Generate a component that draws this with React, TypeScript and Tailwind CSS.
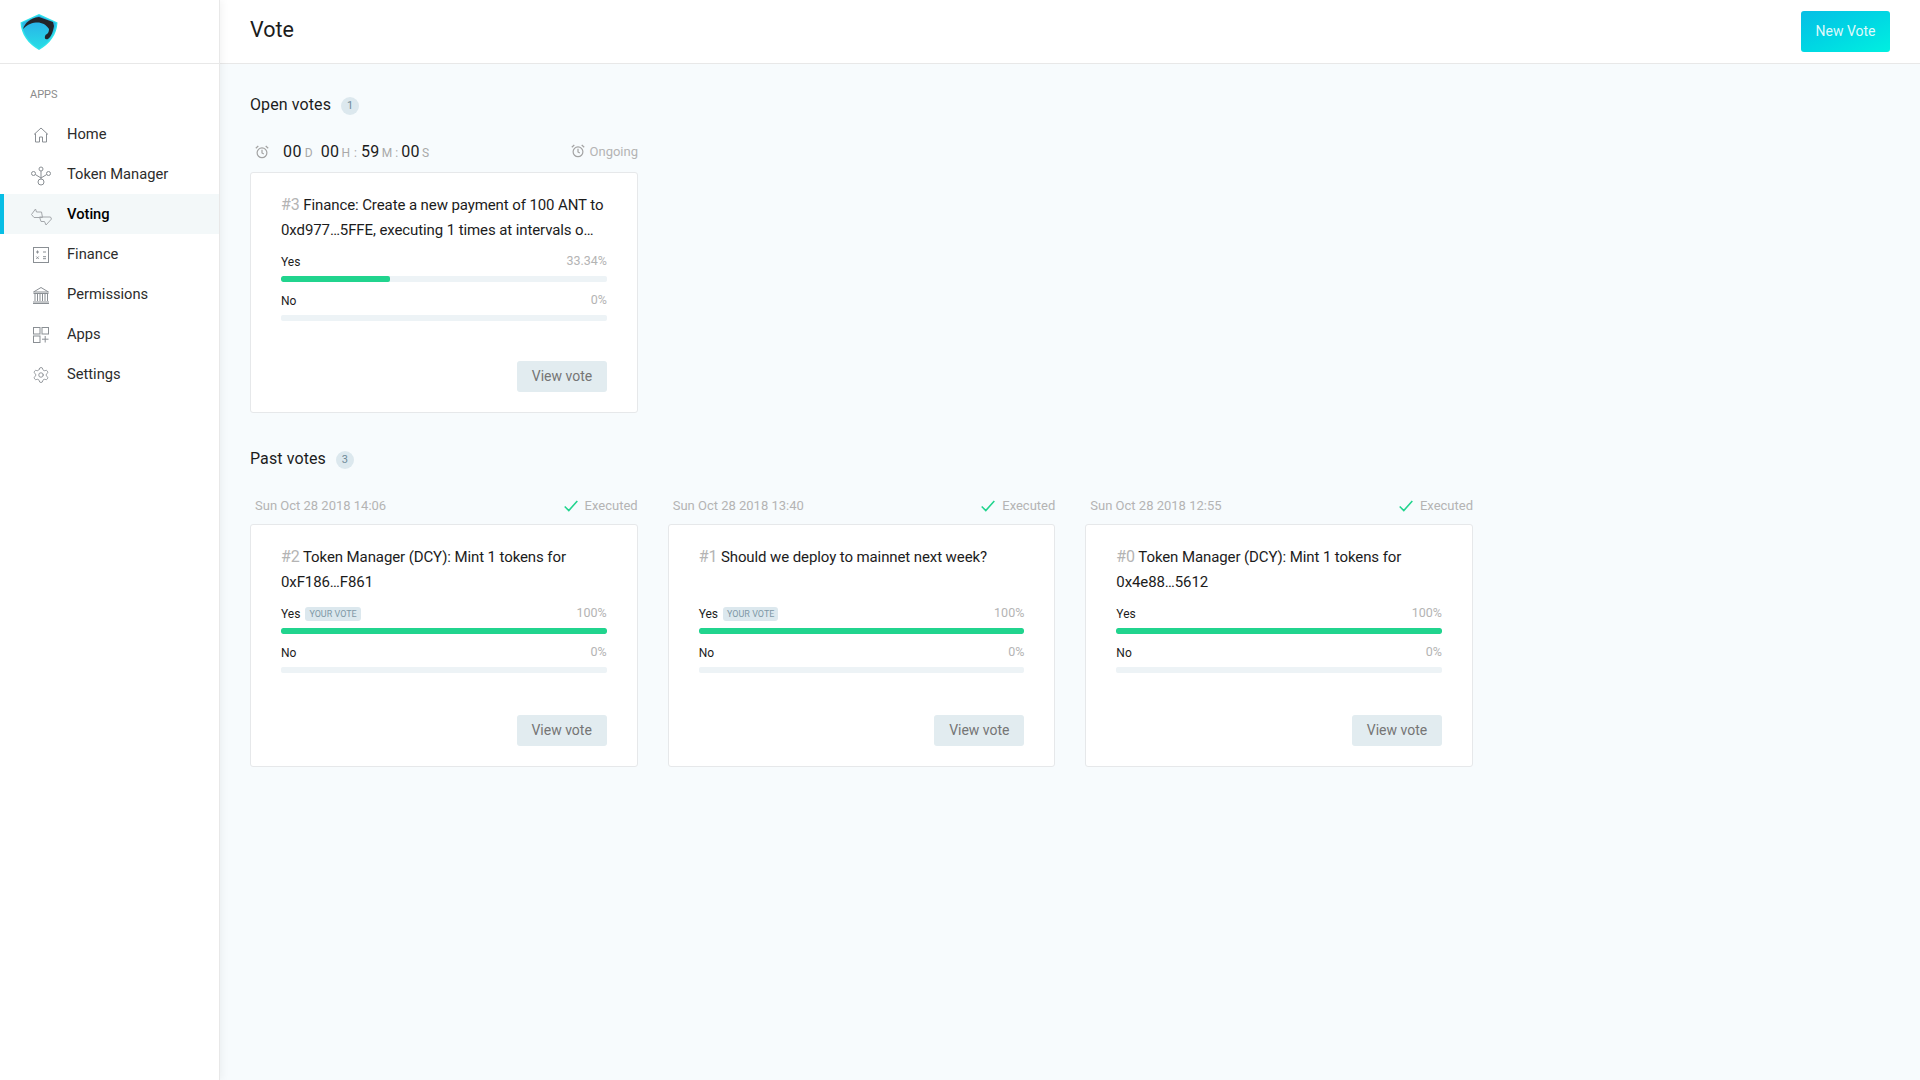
import React from "react";
import { Settings } from "lucide-react";

const FONT = "font-['Roboto','Liberation_Sans',sans-serif]";

const iconProps = {
  width: 22,
  height: 22,
  viewBox: "0 0 22 22",
  fill: "none",
  stroke: "#8a8f94",
  strokeWidth: 1,
};

const HomeIcon = () => (
  <svg {...iconProps}>
    <path d="M4 10.500 11 4l7 6.500M5.500 9.500V18h4v-5h3v5h4V9.500" />
  </svg>
);

const TokenIcon = () => (
  <svg {...iconProps}>
    <circle cx="11" cy="5" r="2" />
    <circle cx="3.500" cy="9.500" r="2" />
    <circle cx="18.500" cy="9.500" r="2" />
    <circle cx="11" cy="18" r="3" />
    <path d="M11 7v8M5.300 10.500 11 14l5.700-3.500" />
  </svg>
);

const VotingIcon = () => (
  <svg {...iconProps} stroke="#a4a8ac">
    <path d="M1.500 10.500 5.500 5l1 3h5l1 5.500H4z" />
    <path d="M21.500 15 16 21l-1.500-3.500H11L9.500 13h11z" />
  </svg>
);

const FinanceIcon = () => (
  <svg {...iconProps}>
    <rect x="3.500" y="3.500" width="15" height="15" />
    <path d="M6 8h3M7.500 6.500v3M13 8h3M6.300 12.500l2.400 2.400M8.700 12.500l-2.400 2.400M13 12.700h3M13 14.700h3" />
  </svg>
);

const BankIcon = () => (
  <svg {...iconProps}>
    <path d="M3.500 8 11 3.500 18.500 8zM3.500 9.500h15M5 10v7M7.500 10v7M10 10v7M12.500 10v7M15 10v7M17.500 10v7M3 18h16M3 19.500h16" />
  </svg>
);

const AppsIcon = () => (
  <svg {...iconProps}>
    <rect x="3.500" y="3.500" width="6.500" height="6.500" />
    <rect x="12" y="3.500" width="6.500" height="6.500" />
    <rect x="3.500" y="12" width="6.500" height="6.500" />
    <path d="M15.200 12v6.500M12 15.200h6.500" />
  </svg>
);

const AlarmIcon = ({ className }: { className: string }) => (
  <svg width="14" height="14" viewBox="0 0 14 14" fill="none" stroke="#a3a3a3" strokeWidth="1.200" className={className}>
    <circle cx="7" cy="7.800" r="4.900" />
    <path d="M7 4.800v3.200l1.800 1M.8 3.300 3.300 1M13.200 3.300 10.700 1" />
  </svg>
);

const CheckIcon = () => (
  <svg width="14" height="12" viewBox="0 0 14 12" fill="none" stroke="#21d48e" strokeWidth="1.600" className="mr-[7px]">
    <path d="M.7 6.500 4.800 10.500 13.300 1" />
  </svg>
);

const Logo = () => (
  <svg width="38" height="36" viewBox="0 0 38 36">
    <defs>
      <linearGradient id="shield" x1="0" y1="0" x2="0" y2="1">
        <stop offset="0" stopColor="#2aa8e8" />
        <stop offset="1" stopColor="#27dde6" />
      </linearGradient>
    </defs>
    <path d="M19 0 37.500 8.500C37 20 30 30 19 36 8 30 1 20 .5 8.500z" fill="#2fe3ea" />
    <path d="M19 1.500 36 9C35.500 19.500 29 28.500 19 34.500 9 28.500 2.500 19.500 2 9z" fill="url(#shield)" />
    <path d="M3 15C5 9 10 4 19 3l14 5 1 4C33 18 31 23 28 25 25 26 24 24 25.500 21 27 20 29 19 29 15 26 10 21 8 16 8.500 10 9 6 12 3 15z" fill="#22252a" />
  </svg>
);

const navItems: { label: string; icon: React.ReactNode; active?: boolean }[] = [
  { label: "Home", icon: <HomeIcon /> },
  { label: "Token Manager", icon: <TokenIcon /> },
  { label: "Voting", icon: <VotingIcon />, active: true },
  { label: "Finance", icon: <FinanceIcon /> },
  { label: "Permissions", icon: <BankIcon /> },
  { label: "Apps", icon: <AppsIcon /> },
  { label: "Settings", icon: <Settings size={18} strokeWidth={1.2} color="#8a8f94" className="mx-[2px]" /> },
];

const Bar = ({ label, pct, width, yourVote }: { label: string; pct: string; width: string; yourVote?: boolean }) => (
  <div className="mb-[9px]">
    <div className="flex h-[18px] items-center justify-between pt-px text-[12px]">
      <div className="flex items-center">
        <span className="text-[#1c1c1c]">{label}</span>
        {yourVote && (
          <span className="ml-[5px] rounded-[3px] bg-[#dce8ee] px-1 py-px text-[9px] leading-[12px] text-[#7f98a6]">
            YOUR VOTE
          </span>
        )}
      </div>
      <span className="text-[12.5px] text-[#b4b4b4]">{pct}</span>
    </div>
    <div className="mt-[6px] h-[6px] overflow-hidden rounded-[2px] bg-[#edf3f6]">
      {width !== "0" && <div className={`h-full rounded-[2px] bg-[#21d48e] ${width}`} />}
    </div>
  </div>
);

const VoteCard = ({
  num,
  lines,
  yes,
  yesWidth,
  yourVote,
  tall,
}: {
  num: string;
  lines: string[];
  yes: string;
  yesWidth: string;
  yourVote?: boolean;
  tall?: boolean;
}) => (
  <div
    className={`flex flex-col rounded-[3px] border border-[#e6e8ea] bg-white px-[30px] pb-5 pt-[19px] ${tall ? "h-[243px]" : "h-[241px]"}`}
  >
    <div className="mb-[10px] h-[50px] text-[15px] leading-[25px] tracking-[-0.1px] text-[#1c1c1c]">
      <div className="whitespace-nowrap">
        <span className="text-[16px] text-[#b4b4b4]">{num}</span> {lines[0]}
      </div>
      {lines[1] && <div className="whitespace-nowrap">{lines[1]}</div>}
    </div>
    <Bar label="Yes" pct={yes} width={yesWidth} yourVote={yourVote} />
    <Bar label="No" pct="0%" width="0" />
    <button className="ml-auto mt-auto h-[31px] w-[90px] rounded-[3px] bg-[#e2ecf0] text-[14px] text-[#757575]">
      View vote
    </button>
  </div>
);

const Unit = ({ children, className = "" }: { children: string; className?: string }) => (
  <span className={`text-[12px] text-[#a9a9a9] ${className}`}>{children}</span>
);

const Digits = ({ children, className = "" }: { children: string; className?: string }) => (
  <span className={`text-[16px] tracking-[0.4px] ${className}`}>{children}</span>
);

const PastMeta = ({ date }: { date: string }) => (
  <div className="mb-2 flex h-5 items-center justify-between pl-[5px] text-[13px] text-[#b4b4b4]">
    <span>{date}</span>
    <span className="flex items-center">
      <CheckIcon />
      Executed
    </span>
  </div>
);

const SectionTitle = ({ title, count }: { title: string; count: string }) => (
  <div className="flex h-6 items-center">
    <h2 className="text-[16px] font-normal tracking-[0.1px] text-[#1c1c1c]">{title}</h2>
    <span className="ml-[10px] mt-[2px] flex h-[18px] w-[18px] items-center justify-center rounded-full bg-[#dce8ee] text-[11px] text-[#6f8a99]">
      {count}
    </span>
  </div>
);

export default function App() {
  return (
    <div className={`${FONT} flex min-h-screen bg-[#f7fbfd]`}>
      <aside className="z-10 w-[220px] shrink-0 border-r border-[#e8e8e8] bg-white shadow-[2px_0_8px_rgba(0,0,0,0.05)]">
        <div className="flex h-16 items-center border-b border-[#e8e8e8] pl-5">
          <Logo />
        </div>
        <div className="pl-[30px] pt-6 text-[11px] leading-[14px] text-[#8b8b8b]">APPS</div>
        <nav className="mt-3">
          {navItems.map((item) => (
            <div
              key={item.label}
              className={`flex h-10 items-center border-l-4 pl-[26px] pt-px text-[14.7px] ${
                item.active ? "border-[#08bee5] bg-[#f3f8f9] font-medium text-black" : "border-transparent text-[#2c2c2c]"
              }`}
            >
              <span className="flex w-[37px] shrink-0">{item.icon}</span>
              {item.label}
            </div>
          ))}
        </nav>
      </aside>

      <main className="min-w-0 flex-1">
        <header className="flex h-16 items-center justify-between border-b border-[#e8e8e8] bg-white px-[30px]">
          <h1 className="pb-[2px] text-[21.500px] font-normal text-[#1c1c1c]">Vote</h1>
          <button className="h-[41px] w-[89px] rounded-[3px] bg-gradient-to-br from-[#08bee5] to-[#00f0e0] text-[14px] text-[#dff9fb]">
            New Vote
          </button>
        </header>

        <div className="pl-[30px] pt-[29px]">
          <SectionTitle title="Open votes" count="1" />
          <div className="mt-[25px] w-[388px]">
            <div className="mb-[10px] flex h-5 items-center justify-between pl-[5px]">
              <div className="flex items-baseline text-[#1c1c1c]">
                <AlarmIcon className="mr-[14px] self-center" />
                <Digits>00</Digits>
                <Unit className="ml-[3px]">D</Unit>
                <Digits className="ml-2">00</Digits>
                <Unit className="ml-[2px]">H</Unit>
                <Unit className="ml-1">:</Unit>
                <Digits className="ml-1">59</Digits>
                <Unit className="ml-[2px]">M</Unit>
                <Unit className="ml-[3px]">:</Unit>
                <Digits className="ml-[3px]">00</Digits>
                <Unit className="ml-[2px]">S</Unit>
              </div>
              <span className="flex items-center text-[13px] text-[#b4b4b4]">
                <AlarmIcon className="mb-[3px] mr-[5px]" />
                Ongoing
              </span>
            </div>
            <VoteCard
              num="#3"
              lines={["Finance: Create a new payment of 100 ANT to", "0xd977…5FFE, executing 1 times at intervals o…"]}
              yes="33.34%"
              yesWidth="w-[33.34%]"
            />
          </div>

          <div className="mt-[34px]">
            <SectionTitle title="Past votes" count="3" />
          </div>
          <div className="mt-[25px] grid w-[1223px] grid-cols-3 gap-x-[30px]">
            <div>
              <PastMeta date="Sun Oct 28 2018 14:06" />
              <VoteCard tall num="#2" lines={["Token Manager (DCY): Mint 1 tokens for", "0xF186…F861"]} yes="100%" yesWidth="w-full" yourVote />
            </div>
            <div>
              <PastMeta date="Sun Oct 28 2018 13:40" />
              <VoteCard tall num="#1" lines={["Should we deploy to mainnet next week?"]} yes="100%" yesWidth="w-full" yourVote />
            </div>
            <div>
              <PastMeta date="Sun Oct 28 2018 12:55" />
              <VoteCard tall num="#0" lines={["Token Manager (DCY): Mint 1 tokens for", "0x4e88…5612"]} yes="100%" yesWidth="w-full" />
            </div>
          </div>
        </div>
      </main>
    </div>
  );
}
